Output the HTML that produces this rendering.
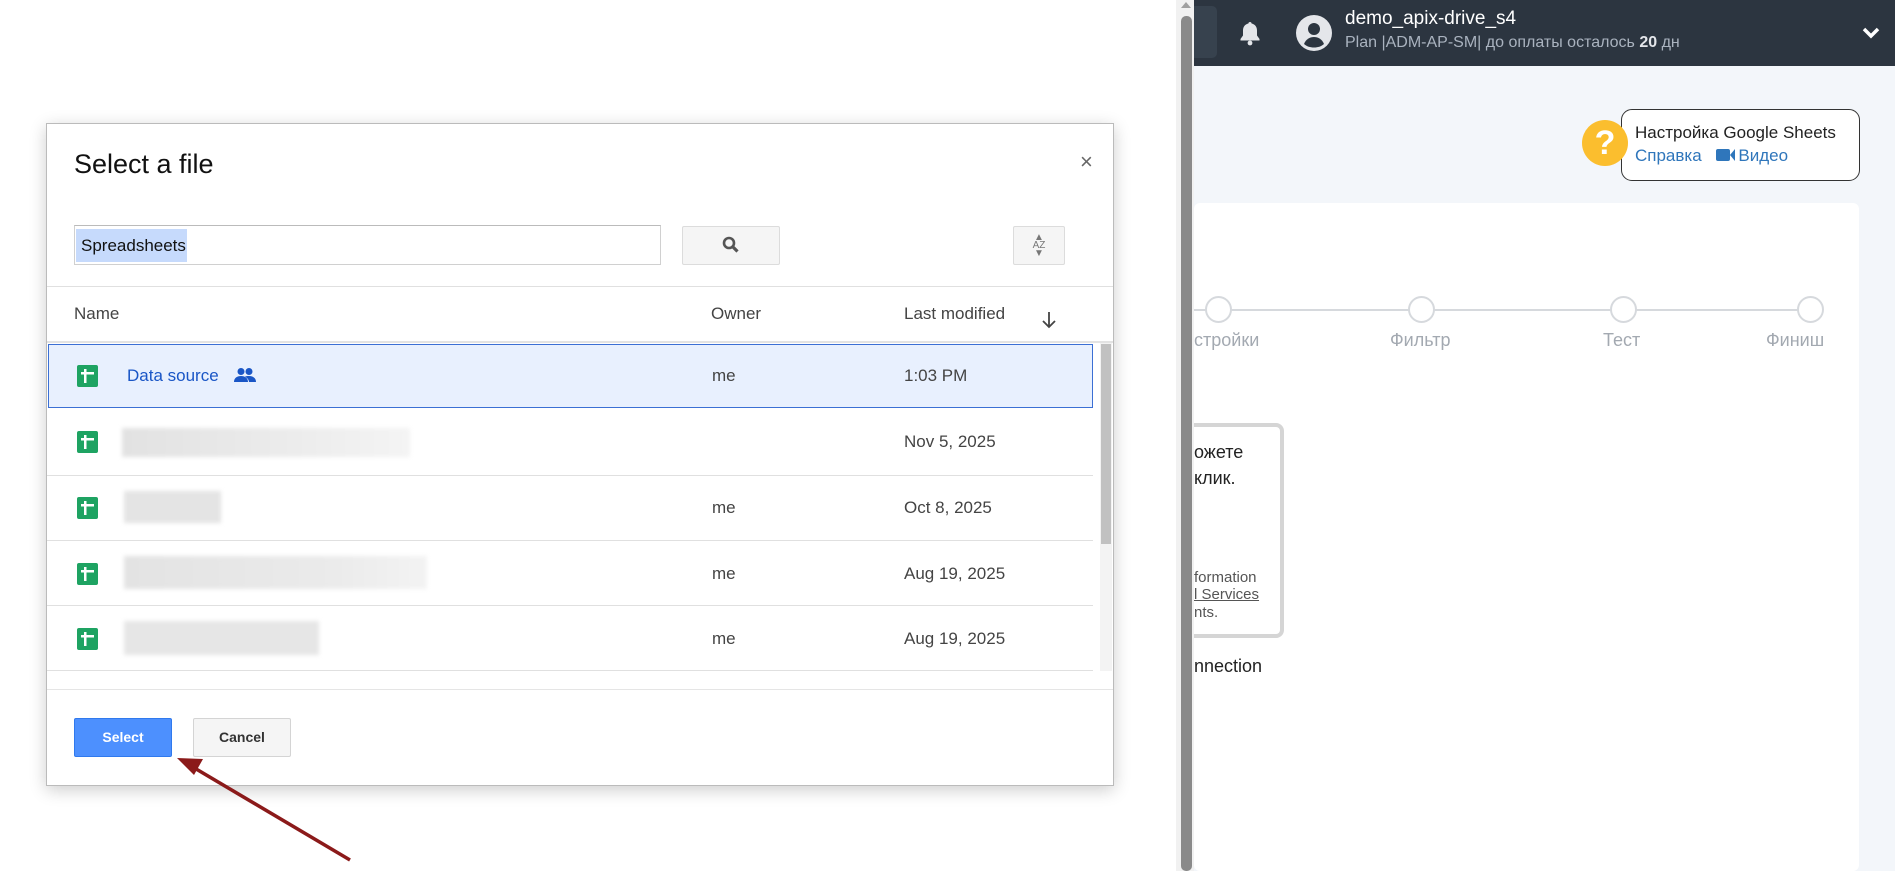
<!DOCTYPE html>
<html><head><meta charset="utf-8"><style>
*{box-sizing:border-box;margin:0;padding:0}
body{width:1895px;height:871px;overflow:hidden;background:#fff;font-family:"Liberation Sans",Arial,sans-serif;position:relative}
.a{position:absolute}
.t{white-space:nowrap}
</style></head><body>
<div class="a" style="left:1194px;top:0;width:701px;height:871px;background:#f3f6fa"></div>
<div class="a" style="left:1194px;top:0;width:701px;height:66px;background:#2c3540"></div>
<div class="a" style="left:1190px;top:6px;width:27px;height:52px;background:#37424e;border-radius:5px"></div>
<svg class="a" style="left:1238px;top:20px" width="24" height="26" viewBox="0 0 24 26"><path d="M12 2c-1 0-1.6.7-1.6 1.5C6.8 4.3 5 7 5 10.5v5L2.5 19v1.5h19V19L19 15.5v-5c0-3.5-1.8-6.2-5.4-7C13.6 2.7 13 2 12 2z" fill="#e4e6ea"/><circle cx="12" cy="23" r="2.4" fill="#e4e6ea"/></svg>
<svg class="a" style="left:1296px;top:15px" width="36" height="36" viewBox="0 0 36 36"><circle cx="18" cy="18" r="18" fill="#e4e6ea"/><circle cx="18" cy="14" r="6" fill="#2c3540"/><path d="M8 29c2-5 6-7 10-7s8 2 10 7c-3 2.5-6 3.5-10 3.5S11 31.5 8 29z" fill="#2c3540"/></svg>
<div class="a t" style="left:1345px;top:8px;font-size:19px;color:#fff">demo_apix-drive_s4</div>
<div class="a t" style="left:1345px;top:34px;font-size:16px;color:#aab3bf">Plan |ADM-AP-SM| до оплаты осталось <b style="color:#e4e6ea">20</b> дн</div>
<svg class="a" style="left:1862px;top:26px" width="18" height="14" viewBox="0 0 18 14"><path d="M2 3l7 7 7-7" stroke="#fff" stroke-width="3.5" fill="none"/></svg>

<div class="a" style="left:1621px;top:109px;width:239px;height:72px;border:1px solid #333;border-radius:11px;background:#fff"></div>
<div class="a" style="left:1582px;top:120px;width:46px;height:46px;border-radius:50%;background:#fbbe2e;color:#fff;font-weight:bold;font-size:34px;text-align:center;line-height:46px">?</div>
<div class="a t" style="left:1635px;top:123px;font-size:17px;color:#222">Настройка Google Sheets</div>
<div class="a t" style="left:1635px;top:146px;font-size:17px;color:#2f76bb">Справка <span style="display:inline-block;width:14px;height:12px;background:#2f76bb;margin-left:10px;border-radius:2px"></span><span style="display:inline-block;width:0;height:0;border-top:6px solid transparent;border-bottom:6px solid transparent;border-right:5px solid #2f76bb;margin-right:3px"></span>Видео</div>

<div class="a" style="left:1194px;top:203px;width:665px;height:668px;background:#fff;border-radius:6px"></div>
<div class="a" style="left:1194px;top:309px;width:616px;height:2px;background:#d6d9dd"></div>
<div class="a" style="left:1205px;top:296px;width:27px;height:27px;border-radius:50%;border:2px solid #d6d9dd;background:#fff"></div>
<div class="a" style="left:1408px;top:296px;width:27px;height:27px;border-radius:50%;border:2px solid #d6d9dd;background:#fff"></div>
<div class="a" style="left:1610px;top:296px;width:27px;height:27px;border-radius:50%;border:2px solid #d6d9dd;background:#fff"></div>
<div class="a" style="left:1797px;top:296px;width:27px;height:27px;border-radius:50%;border:2px solid #d6d9dd;background:#fff"></div>
<div class="a t" style="left:1194px;top:330px;font-size:18px;color:#a3a9b1">стройки</div>
<div class="a t" style="left:1390px;top:330px;font-size:18px;color:#a3a9b1">Фильтр</div>
<div class="a t" style="left:1603px;top:330px;font-size:18px;color:#a3a9b1">Тест</div>
<div class="a t" style="left:1766px;top:330px;font-size:18px;color:#a3a9b1">Финиш</div>

<div class="a" style="left:1160px;top:423px;width:124px;height:215px;border:4px solid #d5d5d5;border-radius:8px;background:#fff"></div>
<div class="a t" style="left:1194px;top:442px;font-size:18px;color:#222">ожете</div>
<div class="a t" style="left:1194px;top:468px;font-size:18px;color:#222">клик.</div>
<div class="a t" style="left:1194px;top:569px;font-size:15px;color:#555">formation</div>
<div class="a t" style="left:1194px;top:586px;font-size:15px;color:#555;text-decoration:underline">l Services</div>
<div class="a t" style="left:1194px;top:604px;font-size:15px;color:#555">nts.</div>
<div class="a t" style="left:1194px;top:656px;font-size:18px;color:#222">nnection</div>

<div class="a" style="left:1122px;top:0;width:54px;height:871px;background:#fff"></div>
<div class="a" style="left:1176px;top:0;width:18px;height:871px;background:#f1f1f1"></div>
<div class="a" style="left:1181px;top:16px;width:11px;height:855px;background:#8a8a8a;border-radius:5px"></div>
<div class="a" style="left:1181px;top:2px;width:0;height:0;border-left:5px solid transparent;border-right:5px solid transparent;border-bottom:6px solid #a0a0a0"></div>

<div class="a" style="left:46px;top:123px;width:1068px;height:663px;background:#fff;border:1px solid #bbb;box-shadow:0 4px 16px rgba(0,0,0,.2)"></div>
<div class="a t" style="left:74px;top:149px;font-size:27px;color:#111">Select a file</div>
<div class="a t" style="left:1080px;top:149px;font-size:22px;color:#666">×</div>
<div class="a" style="left:74px;top:225px;width:587px;height:40px;border:1px solid #d0d0d0;border-top-color:#bbb"></div>
<div class="a t" style="left:76px;top:229px;width:111px;height:33px;background:#c6dafc;font-size:17px;line-height:33px;padding-left:5px;color:#111">Spreadsheets</div>
<div class="a" style="left:682px;top:226px;width:98px;height:39px;background:#f5f5f5;border:1px solid #dcdcdc;border-radius:2px"></div>
<svg class="a" style="left:721px;top:235px" width="20" height="20" viewBox="0 0 20 20"><circle cx="8" cy="8" r="5" stroke="#555" stroke-width="2.6" fill="none"/><path d="M11.5 11.5l5 5" stroke="#555" stroke-width="3.2"/></svg>
<div class="a" style="left:1013px;top:226px;width:52px;height:39px;background:#f5f5f5;border:1px solid #dcdcdc;border-radius:2px"></div>
<div class="a" style="left:1029px;top:234px;font-size:10px;color:#777;text-align:center;line-height:8px;width:20px">▲<br>AZ<br>▼</div>
<div class="a" style="left:47px;top:286px;width:1066px;height:1px;background:#e0e0e0"></div>
<div class="a t" style="left:74px;top:304px;font-size:17px;color:#444">Name</div>
<div class="a t" style="left:711px;top:304px;font-size:17px;color:#444">Owner</div>
<div class="a t" style="left:904px;top:304px;font-size:17px;color:#444">Last modified</div>
<svg class="a" style="left:1040px;top:310px" width="18" height="20" viewBox="0 0 18 20"><path d="M9 2v15M3 11l6 6 6-6" stroke="#444" stroke-width="1.8" fill="none"/></svg>
<div class="a" style="left:47px;top:341px;width:1066px;height:2px;background:#e3e3e3"></div>

<div class="a" style="left:48px;top:344px;width:1045px;height:64px;background:#e8f0fe;border:1px solid #3b6fd4"></div>
<div class="a" style="left:47px;top:475px;width:1046px;height:1px;background:#e0e0e0"></div>
<div class="a" style="left:47px;top:540px;width:1046px;height:1px;background:#e0e0e0"></div>
<div class="a" style="left:47px;top:605px;width:1046px;height:1px;background:#e0e0e0"></div>
<div class="a" style="left:47px;top:670px;width:1046px;height:1px;background:#e0e0e0"></div>

<svg class="a" style="left:77px;top:365px" width="21" height="22" viewBox="0 0 21 22"><rect width="21" height="22" rx="2" fill="#1ea362"/><rect x="4" y="7" width="13" height="2.5" fill="#fff"/><rect x="7" y="4" width="2.5" height="14" fill="#fff"/></svg>
<svg class="a" style="left:77px;top:431px" width="21" height="22" viewBox="0 0 21 22"><rect width="21" height="22" rx="2" fill="#1ea362"/><rect x="4" y="7" width="13" height="2.5" fill="#fff"/><rect x="7" y="4" width="2.5" height="14" fill="#fff"/></svg>
<svg class="a" style="left:77px;top:497px" width="21" height="22" viewBox="0 0 21 22"><rect width="21" height="22" rx="2" fill="#1ea362"/><rect x="4" y="7" width="13" height="2.5" fill="#fff"/><rect x="7" y="4" width="2.5" height="14" fill="#fff"/></svg>
<svg class="a" style="left:77px;top:563px" width="21" height="22" viewBox="0 0 21 22"><rect width="21" height="22" rx="2" fill="#1ea362"/><rect x="4" y="7" width="13" height="2.5" fill="#fff"/><rect x="7" y="4" width="2.5" height="14" fill="#fff"/></svg>
<svg class="a" style="left:77px;top:628px" width="21" height="22" viewBox="0 0 21 22"><rect width="21" height="22" rx="2" fill="#1ea362"/><rect x="4" y="7" width="13" height="2.5" fill="#fff"/><rect x="7" y="4" width="2.5" height="14" fill="#fff"/></svg>

<div class="a t" style="left:127px;top:366px;font-size:17px;color:#1a56c6">Data source</div>
<svg class="a" style="left:233px;top:367px" width="24" height="16" viewBox="0 0 24 16"><circle cx="8" cy="4.5" r="3.5" fill="#1a56c6"/><circle cx="16" cy="4.5" r="3.5" fill="#1a56c6"/><path d="M1 15c0-4 3-6 7-6s7 2 7 6zM12 9.5c1-.4 2.5-.5 4-.5 4 0 7 2 7 6h-7c0-2-1.5-4-4-5.5z" fill="#1a56c6"/></svg>
<div class="a t" style="left:712px;top:366px;font-size:17px;color:#444">me</div>
<div class="a t" style="left:904px;top:366px;font-size:17px;color:#444">1:03 PM</div>

<div class="a" style="left:122px;top:428px;width:288px;height:29px;background:linear-gradient(90deg,#e2e2e2,#ececec 60%,#f4f4f4);filter:blur(2px)"></div>
<div class="a t" style="left:904px;top:432px;font-size:17px;color:#444">Nov 5, 2025</div>
<div class="a" style="left:124px;top:491px;width:97px;height:32px;background:#e4e4e4;filter:blur(2px)"></div>
<div class="a t" style="left:712px;top:498px;font-size:17px;color:#444">me</div>
<div class="a t" style="left:904px;top:498px;font-size:17px;color:#444">Oct 8, 2025</div>
<div class="a" style="left:124px;top:556px;width:303px;height:33px;background:linear-gradient(90deg,#e3e3e3,#ebebeb 70%,#f3f3f3);filter:blur(2px)"></div>
<div class="a t" style="left:712px;top:564px;font-size:17px;color:#444">me</div>
<div class="a t" style="left:904px;top:564px;font-size:17px;color:#444">Aug 19, 2025</div>
<div class="a" style="left:124px;top:621px;width:195px;height:34px;background:#e6e6e6;filter:blur(2px)"></div>
<div class="a t" style="left:712px;top:629px;font-size:17px;color:#444">me</div>
<div class="a t" style="left:904px;top:629px;font-size:17px;color:#444">Aug 19, 2025</div>

<div class="a" style="left:1100px;top:343px;width:12px;height:328px;background:#f3f3f3"></div>
<div class="a" style="left:1101px;top:344px;width:10px;height:200px;background:#c1c1c1"></div>
<div class="a" style="left:47px;top:689px;width:1066px;height:1px;background:#e5e5e5"></div>

<div class="a" style="left:74px;top:718px;width:98px;height:39px;background:#4d90fe;border:1px solid #3079ed;border-radius:2px;color:#fff;font-weight:bold;font-size:14px;text-align:center;line-height:37px">Select</div>
<div class="a" style="left:193px;top:718px;width:98px;height:39px;background:#f5f5f5;border:1px solid #d4d4d4;border-radius:2px;color:#333;font-weight:bold;font-size:14px;text-align:center;line-height:37px">Cancel</div>

<svg class="a" style="left:0;top:0" width="1895" height="871" viewBox="0 0 1895 871"><path d="M350 860L186 763" stroke="#8b1a1a" stroke-width="3.5"/><path d="M177 758l26 1-9 16z" fill="#8b1a1a"/></svg>
</body></html>
